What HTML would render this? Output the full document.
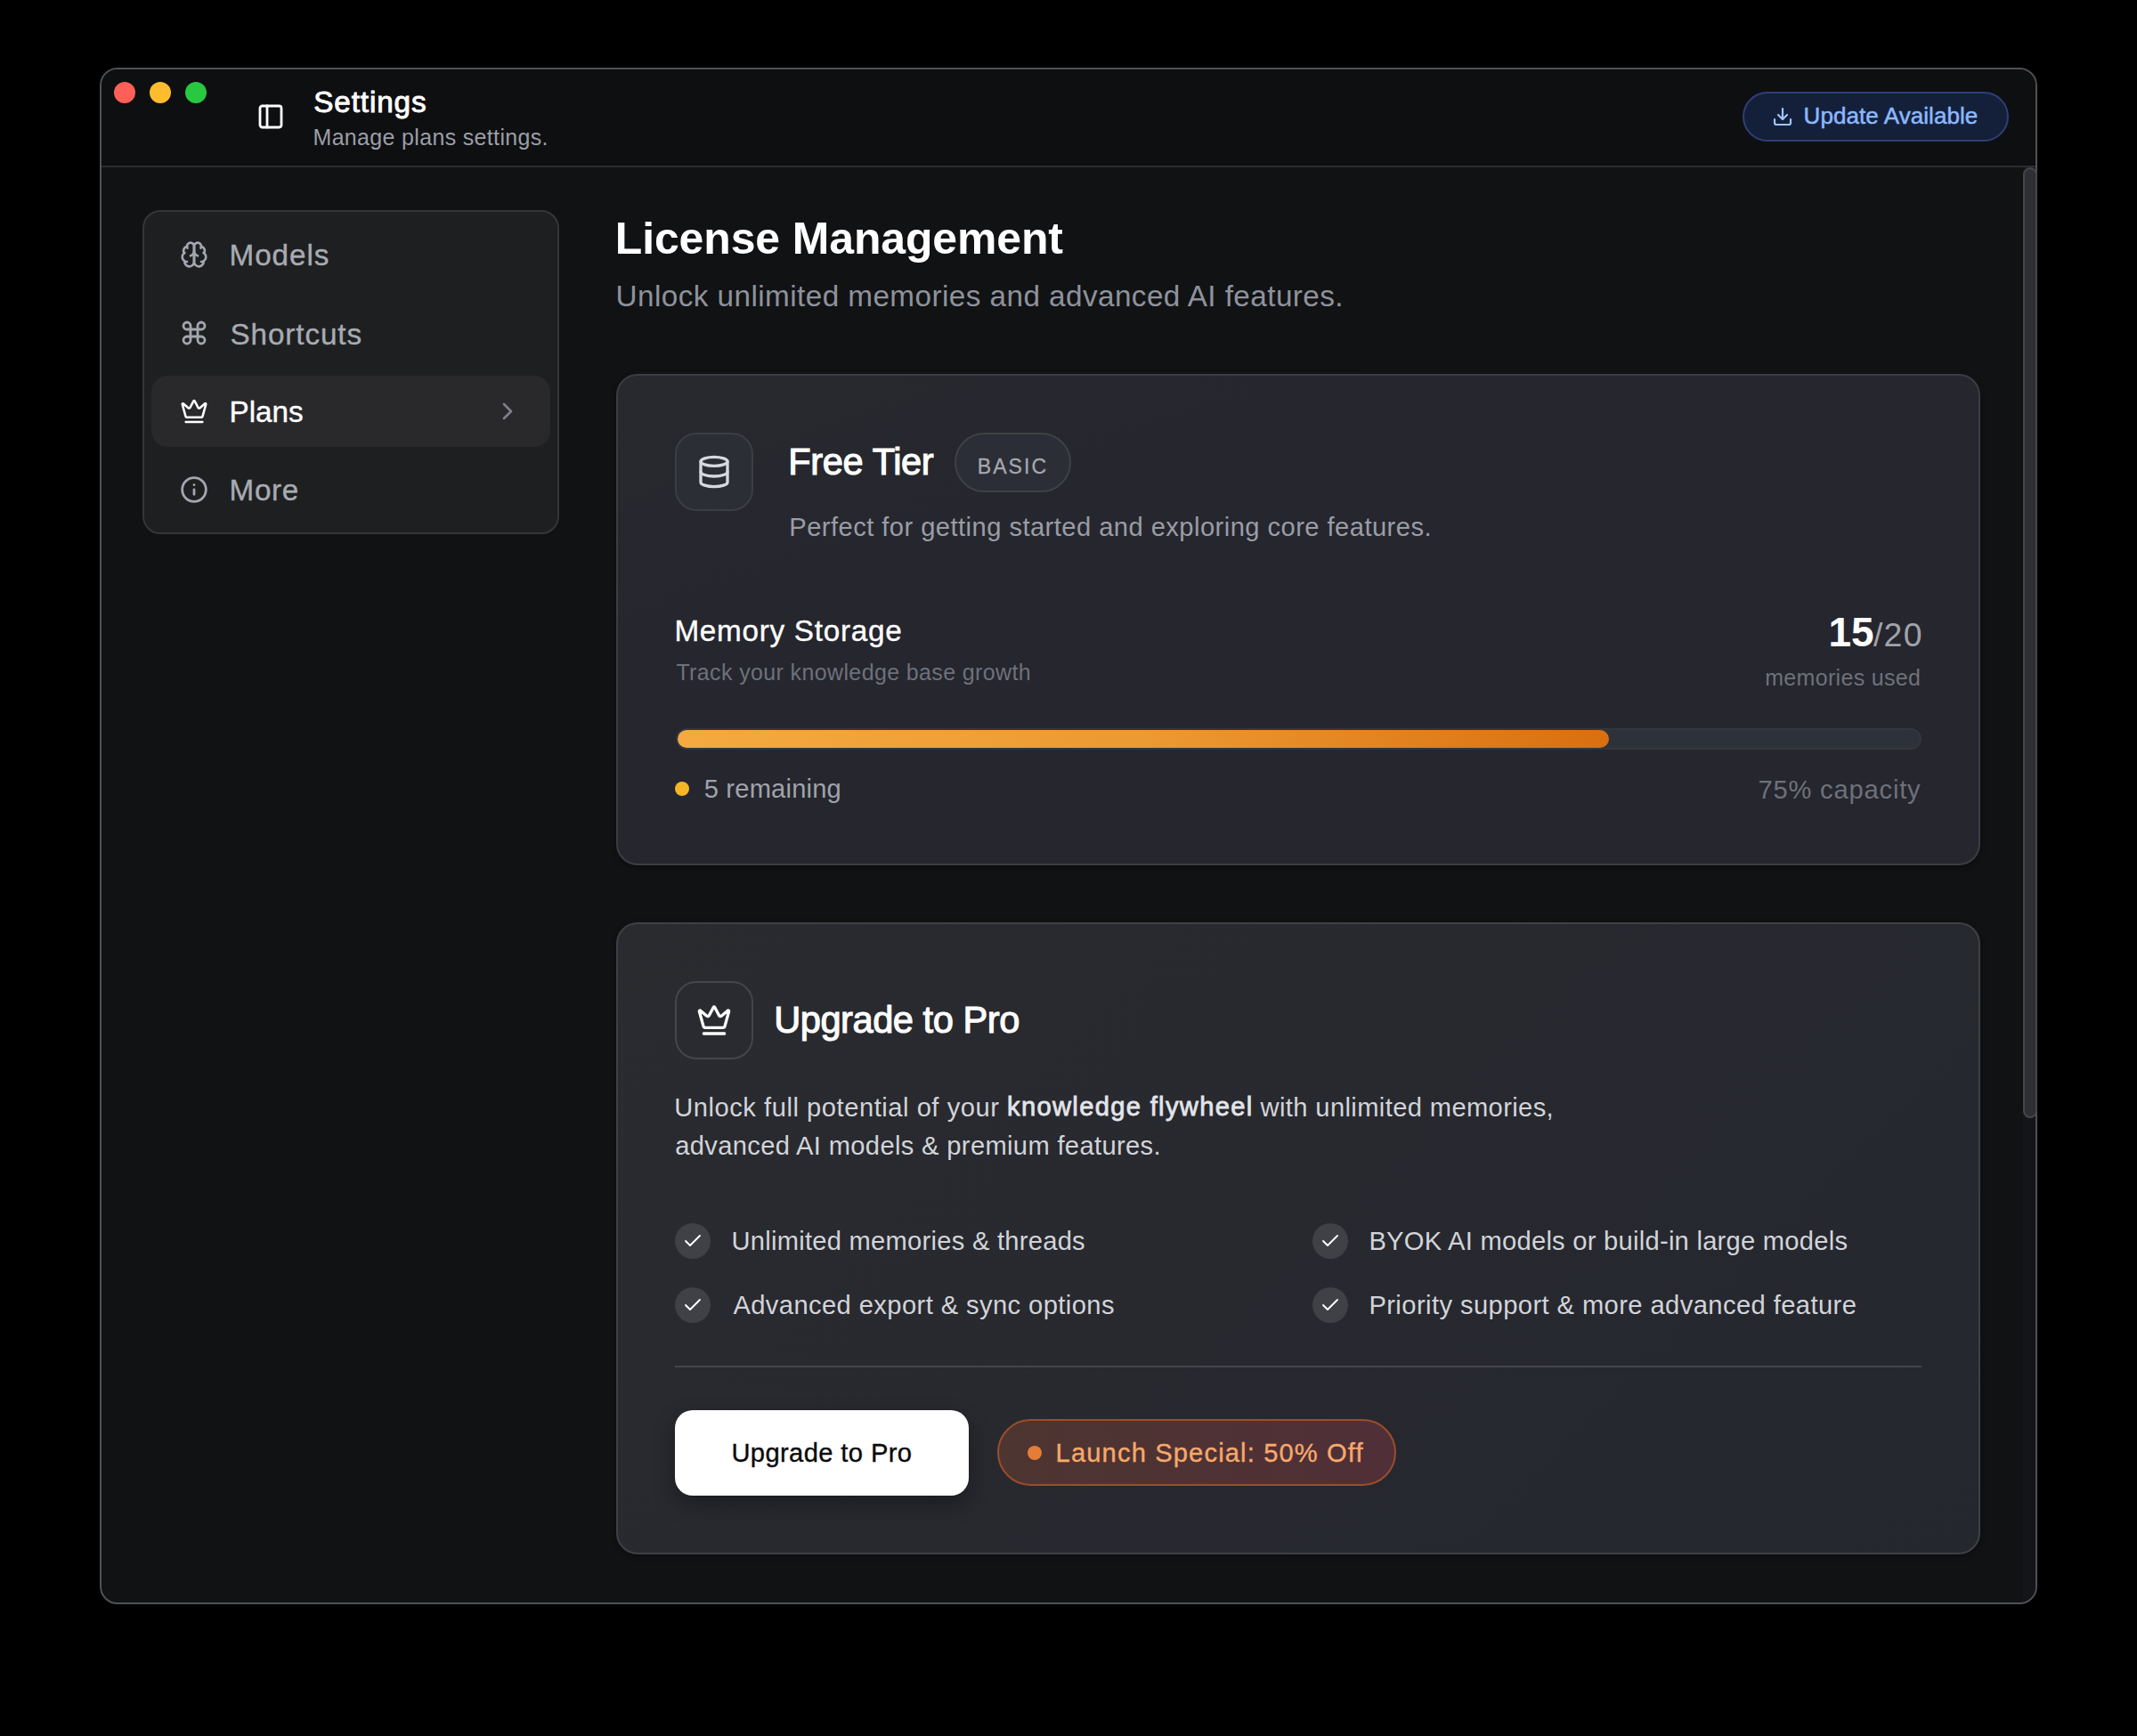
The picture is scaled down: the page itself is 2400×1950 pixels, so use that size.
<!DOCTYPE html>
<html><head><meta charset="utf-8">
<style>
*{box-sizing:border-box;margin:0;padding:0}
html,body{width:2400px;height:1950px;background:#000;overflow:hidden}
body{position:relative;font-family:"Liberation Sans",sans-serif}
.a{position:absolute}
.t{position:absolute;white-space:nowrap;line-height:1;font-family:"Liberation Sans",sans-serif}
svg{position:absolute;overflow:visible}
</style></head><body>
<!-- window -->
<div class="a" style="left:112px;top:76px;width:2176px;height:1726px;border:2px solid #505154;border-radius:20px;background:#111214;overflow:hidden">
  <div class="a" style="left:0;top:0;width:2172px;height:110px;background:#0e0f11;border-bottom:2px solid #2c2d30"></div>
  <!-- scrollbar track -->
  <div class="a" style="left:2158px;top:110px;width:14px;height:1614px;background:#141518"></div>
  </div>
<div class="a" style="left:2272px;top:188px;width:16px;height:1068px;background:#2e2f35;border:2px solid #45464b;border-radius:8px"></div>
<!-- traffic lights -->
<div class="a" style="left:128px;top:92px;width:24px;height:24px;border-radius:50%;background:#fe5f57"></div>
<div class="a" style="left:168px;top:92px;width:24px;height:24px;border-radius:50%;background:#febc2e"></div>
<div class="a" style="left:208px;top:92px;width:24px;height:24px;border-radius:50%;background:#28c840"></div>
<!-- sidebar toggle -->
<svg style="left:288px;top:115px" width="32" height="32" viewBox="0 0 24 24" fill="none" stroke="#ffffff" stroke-width="2.1" stroke-linecap="round" stroke-linejoin="round"><rect x="3" y="3" width="18" height="18" rx="2"/><path d="M9 3v18"/></svg>
<!-- update button -->
<div class="a" style="left:1957px;top:103px;width:299px;height:56px;border-radius:28px;background:#14203a;border:2px solid #2f3f78"></div>
<svg style="left:1990px;top:119px" width="24" height="24" viewBox="0 0 24 24" fill="none" stroke="#9cc4fb" stroke-width="2.2" stroke-linecap="round" stroke-linejoin="round"><path d="M21 15v4a2 2 0 0 1-2 2H5a2 2 0 0 1-2-2v-4"/><path d="m7 10 5 5 5-5"/><path d="M12 15V3"/></svg>

<!-- sidebar panel -->
<div class="a" style="left:160px;top:236px;width:468px;height:364px;border-radius:20px;background:#1e1f21;border:2px solid #353638"></div>
<div class="a" style="left:170px;top:422px;width:448px;height:80px;border-radius:18px;background:#29292c"></div>
<!-- nav icons -->
<svg style="left:202px;top:270px" width="32" height="32" viewBox="0 0 24 24" fill="none" stroke="#a3a6ae" stroke-width="2" stroke-linecap="round" stroke-linejoin="round"><path d="M12 5a3 3 0 1 0-5.997.125 4 4 0 0 0-2.526 5.77 4 4 0 0 0 .556 6.588A4 4 0 1 0 12 18Z"/><path d="M12 5a3 3 0 1 1 5.997.125 4 4 0 0 1 2.526 5.77 4 4 0 0 1-.556 6.588A4 4 0 1 1 12 18Z"/><path d="M15 13a4.5 4.5 0 0 1-3-4 4.5 4.5 0 0 1-3 4"/><path d="M17.599 6.5a3 3 0 0 0 .399-1.375"/><path d="M6.003 5.125A3 3 0 0 0 6.401 6.5"/><path d="M3.477 10.896a4 4 0 0 1 .585-.396"/><path d="M19.938 10.5a4 4 0 0 1 .585.396"/><path d="M6 18a4 4 0 0 1-1.967-.516"/><path d="M19.967 17.484A4 4 0 0 1 18 18"/></svg>
<svg style="left:202px;top:358px" width="32" height="32" viewBox="0 0 24 24" fill="none" stroke="#a3a6ae" stroke-width="2.1" stroke-linecap="round" stroke-linejoin="round"><path d="M15 6v12a3 3 0 1 0 3-3H6a3 3 0 1 0 3 3V6a3 3 0 1 0-3 3h12a3 3 0 1 0-3-3"/></svg>
<svg style="left:202px;top:446px" width="32" height="32" viewBox="0 0 24 24" fill="none" stroke="#ffffff" stroke-width="1.9" stroke-linecap="round" stroke-linejoin="round"><path d="M11.562 3.266a.5.5 0 0 1 .876 0L15.39 8.87a1 1 0 0 0 1.516.294L21.183 5.5a.5.5 0 0 1 .798.519l-2.834 10.246a1 1 0 0 1-.956.734H5.81a1 1 0 0 1-.957-.734L2.02 6.02a.5.5 0 0 1 .798-.519l4.276 3.664a1 1 0 0 0 1.516-.294z"/><path d="M5 21h14"/></svg>
<svg style="left:202px;top:534px" width="32" height="32" viewBox="0 0 24 24" fill="none" stroke="#a3a6ae" stroke-width="2.1" stroke-linecap="round" stroke-linejoin="round"><circle cx="12" cy="12" r="10"/><path d="M12 16v-4"/><path d="M12 8h.01"/></svg>
<svg style="left:554px;top:446px" width="32" height="32" viewBox="0 0 24 24" fill="none" stroke="#7d8088" stroke-width="2" stroke-linecap="round" stroke-linejoin="round"><path d="m9 18 6-6-6-6"/></svg>

<!-- card 1 -->
<div class="a" style="left:692px;top:420px;width:1532px;height:552px;border-radius:24px;background:linear-gradient(160deg,#28292e,#25262e 40%);border:2px solid #3c3d42;box-shadow:0 2px 6px rgba(0,0,0,.35)"></div>
<div class="a" style="left:758px;top:486px;width:88px;height:88px;border-radius:24px;background:#2b2e35;border:2px solid #3c3e44"></div>
<svg style="left:782px;top:510px" width="40" height="40" viewBox="0 0 24 24" fill="none" stroke="#d6d9df" stroke-width="2" stroke-linecap="round" stroke-linejoin="round"><ellipse cx="12" cy="5" rx="9" ry="3"/><path d="M3 5V19A9 3 0 0 0 21 19V5"/><path d="M3 12A9 3 0 0 0 21 12"/></svg>
<div class="a" style="left:1072px;top:486px;width:131px;height:67px;border-radius:34px;background:#2b2e36;border:2px solid #3f4148"></div>
<!-- progress -->
<div class="a" style="left:759px;top:818px;width:1399px;height:24px;border-radius:12px;background:#2d313a;border:2px solid #32363f"></div>
<div class="a" style="left:761px;top:820px;width:1046px;height:20px;border-radius:10px;background:linear-gradient(90deg,#f4aa40,#ec9a32 50%,#d96f10)"></div>
<div class="a" style="left:758px;top:878px;width:16px;height:16px;border-radius:50%;background:#f6b526"></div>

<!-- card 2 -->
<div class="a" style="left:692px;top:1036px;width:1532px;height:710px;border-radius:24px;background:linear-gradient(135deg,#2a2b2f,#25272f);border:2px solid #3f4044;box-shadow:0 2px 6px rgba(0,0,0,.35)"></div>
<div class="a" style="left:758px;top:1102px;width:88px;height:88px;border-radius:24px;background:#2a2b30;border:2px solid #45464b"></div>
<svg style="left:782px;top:1126px" width="40" height="40" viewBox="0 0 24 24" fill="none" stroke="#ffffff" stroke-width="2" stroke-linecap="round" stroke-linejoin="round"><path d="M11.562 3.266a.5.5 0 0 1 .876 0L15.39 8.87a1 1 0 0 0 1.516.294L21.183 5.5a.5.5 0 0 1 .798.519l-2.834 10.246a1 1 0 0 1-.956.734H5.81a1 1 0 0 1-.957-.734L2.02 6.02a.5.5 0 0 1 .798-.519l4.276 3.664a1 1 0 0 0 1.516-.294z"/><path d="M5 21h14"/></svg>
<!-- checks -->
<div class="a" style="left:758px;top:1374px;width:40px;height:40px;border-radius:50%;background:#404147"></div>
<div class="a" style="left:758px;top:1446px;width:40px;height:40px;border-radius:50%;background:#404147"></div>
<div class="a" style="left:1474px;top:1374px;width:40px;height:40px;border-radius:50%;background:#404147"></div>
<div class="a" style="left:1474px;top:1446px;width:40px;height:40px;border-radius:50%;background:#404147"></div>
<svg style="left:766px;top:1382px" width="24" height="24" viewBox="0 0 24 24" fill="none" stroke="#ffffff" stroke-width="1.9" stroke-linecap="round" stroke-linejoin="round"><path d="M20 6 9 17l-5-5"/></svg>
<svg style="left:766px;top:1454px" width="24" height="24" viewBox="0 0 24 24" fill="none" stroke="#ffffff" stroke-width="1.9" stroke-linecap="round" stroke-linejoin="round"><path d="M20 6 9 17l-5-5"/></svg>
<svg style="left:1482px;top:1382px" width="24" height="24" viewBox="0 0 24 24" fill="none" stroke="#ffffff" stroke-width="1.9" stroke-linecap="round" stroke-linejoin="round"><path d="M20 6 9 17l-5-5"/></svg>
<svg style="left:1482px;top:1454px" width="24" height="24" viewBox="0 0 24 24" fill="none" stroke="#ffffff" stroke-width="1.9" stroke-linecap="round" stroke-linejoin="round"><path d="M20 6 9 17l-5-5"/></svg>
<!-- divider -->
<div class="a" style="left:758px;top:1534px;width:1400px;height:2px;background:#45464b"></div>
<!-- buttons -->
<div class="a" style="left:758px;top:1584px;width:330px;height:96px;border-radius:20px;background:#ffffff;box-shadow:0 10px 26px rgba(0,0,0,.32)"></div>
<div class="a" style="left:1120px;top:1594px;width:448px;height:75px;border-radius:38px;background:linear-gradient(90deg,#4d3530,#502f38);border:2px solid #9a4e2b"></div>
<div class="a" style="left:1154px;top:1624px;width:16px;height:16px;border-radius:50%;background:#e57d37"></div>

<div class="t" id="settings" style="left:352.2px;top:98.1px;font-size:33.28px;font-weight:400;letter-spacing:0.886px;color:#ffffff;-webkit-text-stroke:0.9px #ffffff">Settings</div>
<div class="t" id="manage" style="left:351.5px;top:141.8px;font-size:24.96px;font-weight:400;letter-spacing:0.352px;color:#9b9ea6">Manage plans settings.</div>
<div class="t" id="update" style="left:2025.6px;top:117.0px;font-size:26.0px;font-weight:400;letter-spacing:0.067px;color:#8cb8ff;-webkit-text-stroke:0.5px #8cb8ff">Update Available</div>
<div class="t" id="models" style="left:257.5px;top:270.4px;font-size:33.28px;font-weight:400;letter-spacing:0.92px;color:#a8abb2;-webkit-text-stroke:0.35px #a8abb2">Models</div>
<div class="t" id="shortcuts" style="left:258.5px;top:358.6px;font-size:33.28px;font-weight:400;letter-spacing:0.875px;color:#a8abb2;-webkit-text-stroke:0.35px #a8abb2">Shortcuts</div>
<div class="t" id="plans" style="left:257.5px;top:446.4px;font-size:33.28px;font-weight:400;letter-spacing:0.0px;color:#ffffff;-webkit-text-stroke:0.35px #ffffff">Plans</div>
<div class="t" id="more" style="left:257.5px;top:534.2px;font-size:33.28px;font-weight:400;letter-spacing:0.667px;color:#a8abb2;-webkit-text-stroke:0.35px #a8abb2">More</div>
<div class="t" id="h1" style="left:690.8px;top:243.9px;font-size:49.92px;font-weight:700;letter-spacing:-0.094px;color:#ffffff">License Management</div>
<div class="t" id="sub" style="left:691.5px;top:315.8px;font-size:33.28px;font-weight:400;letter-spacing:0.44px;color:#8f929b">Unlock unlimited memories and advanced AI features.</div>
<div class="t" id="free" style="left:885.3px;top:498.2px;font-size:41.6px;font-weight:400;letter-spacing:-0.375px;color:#ffffff;-webkit-text-stroke:1.1px #ffffff">Free Tier</div>
<div class="t" id="basic" style="left:1097.7px;top:512.8px;font-size:23px;font-weight:400;letter-spacing:2.1px;color:#a5a8b0;-webkit-text-stroke:0.3px #a5a8b0">BASIC</div>
<div class="t" id="perfect" style="left:886.3px;top:578.2px;font-size:29.12px;font-weight:400;letter-spacing:0.462px;color:#9a9da5">Perfect for getting started and exploring core features.</div>
<div class="t" id="mem" style="left:757.4px;top:692.3px;font-size:33.28px;font-weight:400;letter-spacing:0.723px;color:#ffffff;-webkit-text-stroke:0.35px #ffffff">Memory Storage</div>
<div class="t" id="track" style="left:759.4px;top:742.7px;font-size:24.96px;font-weight:400;letter-spacing:0.394px;color:#6e717a">Track your knowledge base growth</div>
<div class="t" id="n15" style="left:2053.5px;top:687.0px;font-size:46px;font-weight:700;letter-spacing:-0.2px;color:#ffffff">15</div>
<div class="t" id="n20" style="left:2103.9px;top:695.0px;font-size:37.44px;font-weight:400;letter-spacing:1.3px;color:#a0a3ab">/20</div>
<div class="t" id="used" style="left:1982.2px;top:748.5px;font-size:24.96px;font-weight:400;letter-spacing:0.35px;color:#6e717a">memories used</div>
<div class="t" id="remain" style="left:790.7px;top:872.1px;font-size:29.12px;font-weight:400;letter-spacing:0.2px;color:#a0a3ab">5 remaining</div>
<div class="t" id="cap" style="left:1974.5px;top:872.6px;font-size:29.12px;font-weight:400;letter-spacing:0.818px;color:#6e717a">75% capacity</div>
<div class="t" id="up" style="left:869.2px;top:1124.6px;font-size:41.6px;font-weight:400;letter-spacing:-0.462px;color:#ffffff;-webkit-text-stroke:1.1px #ffffff">Upgrade to Pro</div>
<div class="t" id="p1a" style="left:757.2px;top:1230.1px;font-size:29.12px;font-weight:400;letter-spacing:0.543px;color:#d2d4d9">Unlock full potential of your</div>
<div class="t" id="p1b" style="left:1131.0px;top:1229.1px;font-size:29.12px;font-weight:400;letter-spacing:1.341px;color:#e3e5e9;-webkit-text-stroke:0.8px #e3e5e9">knowledge flywheel</div>
<div class="t" id="p1c" style="left:1415.6px;top:1230.1px;font-size:29.12px;font-weight:400;letter-spacing:0.383px;color:#d2d4d9">with unlimited memories,</div>
<div class="t" id="p2" style="left:758.2px;top:1273.3px;font-size:29.12px;font-weight:400;letter-spacing:0.351px;color:#d2d4d9">advanced AI models &amp; premium features.</div>
<div class="t" id="f1" style="left:821.4px;top:1380.2px;font-size:29.12px;font-weight:400;letter-spacing:0.274px;color:#d2d4d9">Unlimited memories &amp; threads</div>
<div class="t" id="f2" style="left:823.4px;top:1452.3px;font-size:29.12px;font-weight:400;letter-spacing:0.421px;color:#d2d4d9">Advanced export &amp; sync options</div>
<div class="t" id="f3" style="left:1537.4px;top:1380.2px;font-size:29.12px;font-weight:400;letter-spacing:0.268px;color:#d2d4d9">BYOK AI models or build-in large models</div>
<div class="t" id="f4" style="left:1537.4px;top:1452.3px;font-size:29.12px;font-weight:400;letter-spacing:0.431px;color:#d2d4d9">Priority support &amp; more advanced feature</div>
<div class="t" id="btn" style="left:821.4px;top:1618.2px;font-size:29.12px;font-weight:400;letter-spacing:0.4px;color:#0a0a0a;-webkit-text-stroke:0.35px #0a0a0a">Upgrade to Pro</div>
<div class="t" id="launch" style="left:1185.6px;top:1617.9px;font-size:29.12px;font-weight:400;letter-spacing:1.145px;color:#f6a96b;-webkit-text-stroke:0.35px #f6a96b">Launch Special: 50% Off</div>
</body></html>
